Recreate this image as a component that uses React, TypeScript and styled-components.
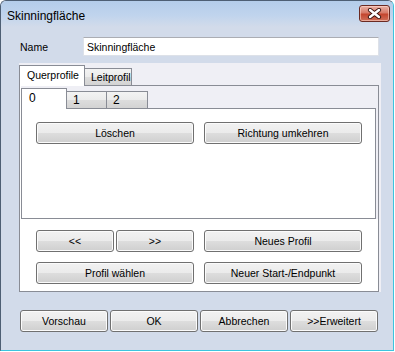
import React from "react";
import styled, { createGlobalStyle } from "styled-components";

const GlobalStyle = createGlobalStyle`
  html, body {
    margin: 0;
    padding: 0;
    background: #ffffff;
  }
  body {
    font-family: "Liberation Sans", Arial, sans-serif;
    font-size: 10.5px;
    color: #000;
  }
`;

const Window = styled.div`
  width: 394px;
  height: 351px;
  box-sizing: border-box;
  border: 1px solid #4e5f74;
  border-right-color: #3cc4de;
  border-bottom-color: #3cc4de;
  border-radius: 6px 6px 0 0;
  background: #d2dbea;
  display: flex;
  flex-direction: column;
  overflow: hidden;
`;

const TitleBar = styled.div`
  height: 26px;
  display: flex;
  align-items: flex-start;
  justify-content: space-between;
  padding: 4px 3px 0 6px;
  box-sizing: border-box;
  background: linear-gradient(#b4cdea 0%, #c0d4ed 55%, #d2dbea 100%);
`;

const Title = styled.span`
  font-size: 12px;
  line-height: 16px;
  padding-top: 3px;
  color: #000;
`;

const CloseButton = styled.div`
  width: 31px;
  height: 17px;
  box-sizing: border-box;
  border: 1px solid #6b2a22;
  border-radius: 3px;
  background: linear-gradient(#eab2a6 0%, #d77a68 45%, #c4462f 55%, #d0705a 100%);
  box-shadow: inset 0 0 0 1px rgba(255, 220, 210, 0.55);
  display: flex;
  align-items: center;
  justify-content: center;
`;

const Content = styled.div`
  display: flex;
  flex-direction: column;
  padding: 10px 12px 0 18px;
`;

const NameRow = styled.div`
  display: flex;
  align-items: center;
  height: 19px;
  margin-right: 2px;
`;

const Label = styled.span`
  width: 63px;
  padding-left: 1px;
  flex-shrink: 0;
`;

const TextBox = styled.input`
  flex: 1;
  height: 19px;
  box-sizing: border-box;
  border: 1px solid #dde1e8;
  border-top-color: #abadb3;
  background: #fff;
  padding: 0 0 0 3px;
  margin: 0;
  font: inherit;
  color: #000;
  outline: none;
`;

const TabControl = styled.div<{ $inner?: boolean }>`
  display: flex;
  flex-direction: column;
  background: #efeff5;
  padding-top: 2px;
  margin: ${(p) => (p.$inner ? "0 0 0 1px" : "7px 0 0 0")};
`;

const TabStrip = styled.div<{ $size?: number }>`
  display: flex;
  align-items: flex-end;
  height: 20px;
  font-size: ${(p) => p.$size ?? 10.5}px;
`;

const Tab = styled.div<{ $active?: boolean; $w: number }>`
  width: ${(p) => p.$w}px;
  height: ${(p) => (p.$active ? 21 : 17)}px;
  margin-bottom: ${(p) => (p.$active ? -1 : 0)}px;
  box-sizing: border-box;
  border: 1px solid #898c95;
  border-bottom: none;
  border-left-width: ${(p) => (p.$active ? 1 : 0)}px;
  &:first-child {
    border-left-width: 1px;
  }
  padding: ${(p) => (p.$active ? "3px 0 0 7px" : "2px 0 0 6px")};
  line-height: 13px;
  background: ${(p) =>
    p.$active ? "#ffffff" : "linear-gradient(#f3f3f3 0%, #ebebeb 50%, #dddddd 51%, #d3d3d3 100%)"};
  position: relative;
  z-index: ${(p) => (p.$active ? 1 : 0)};
  white-space: nowrap;
`;

const Panel = styled.div<{ $h: number }>`
  height: ${(p) => p.$h}px;
  box-sizing: border-box;
  border: 1px solid #898c95;
  background: #ffffff;
  margin-right: 2px;
  display: flex;
  flex-direction: column;
`;

const PanelButtons = styled.div`
  display: grid;
  grid-template-columns: 158px 158px;
  column-gap: 10px;
  padding: 13px 0 0 14px;
`;

const LowerButtons = styled.div`
  display: grid;
  grid-template-columns: 158px 158px;
  column-gap: 10px;
  row-gap: 10px;
  padding: 11px 0 0 16px;
`;

const Pair = styled.div`
  display: grid;
  grid-template-columns: 1fr 1fr;
  column-gap: 2px;
`;

const Button = styled.button`
  height: 22px;
  box-sizing: border-box;
  border: 1px solid #707070;
  border-radius: 3px;
  background: linear-gradient(#f2f2f2 0%, #ebebeb 50%, #dddddd 51%, #cfcfcf 100%);
  box-shadow: inset 0 0 0 1px #fbfbfb;
  font: inherit;
  color: #000;
  padding: 0;
  margin: 0;
  white-space: nowrap;
`;

const DialogButtons = styled.div`
  display: grid;
  grid-template-columns: repeat(4, 88px);
  column-gap: 2px;
  margin: 18px 0 0 1px;
`;

const CloseGlyph = () => (
  <svg width="15" height="11" viewBox="0 0 15 11">
    <path d="M3 2 L12 9 M12 2 L3 9" stroke="#3d1611" strokeWidth="4.2" strokeLinecap="round" />
    <path d="M3 2 L12 9 M12 2 L3 9" stroke="#ffffff" strokeWidth="2.4" strokeLinecap="round" />
  </svg>
);

export default function App() {
  return (
    <>
      <GlobalStyle />
      <Window>
        <TitleBar>
          <Title>Skinningfläche</Title>
          <CloseButton>
            <CloseGlyph />
          </CloseButton>
        </TitleBar>
        <Content>
          <NameRow>
            <Label>Name</Label>
            <TextBox readOnly defaultValue="Skinningfläche" />
          </NameRow>
          <TabControl>
            <TabStrip>
              <Tab $active $w={66}>Querprofile</Tab>
              <Tab $w={47}>Leitprofil</Tab>
            </TabStrip>
            <Panel $h={207}>
              <TabControl $inner>
                <TabStrip $size={12}>
                  <Tab $active $w={46}>0</Tab>
                  <Tab $w={40}>1</Tab>
                  <Tab $w={41}>2</Tab>
                </TabStrip>
                <Panel $h={111}>
                  <PanelButtons>
                    <Button>Löschen</Button>
                    <Button>Richtung umkehren</Button>
                  </PanelButtons>
                </Panel>
              </TabControl>
              <LowerButtons>
                <Pair>
                  <Button>&lt;&lt;</Button>
                  <Button>&gt;&gt;</Button>
                </Pair>
                <Button>Neues Profil</Button>
                <Button>Profil wählen</Button>
                <Button>Neuer Start-/Endpunkt</Button>
              </LowerButtons>
            </Panel>
          </TabControl>
          <DialogButtons>
            <Button>Vorschau</Button>
            <Button>OK</Button>
            <Button>Abbrechen</Button>
            <Button>&gt;&gt;Erweitert</Button>
          </DialogButtons>
        </Content>
      </Window>
    </>
  );
}
